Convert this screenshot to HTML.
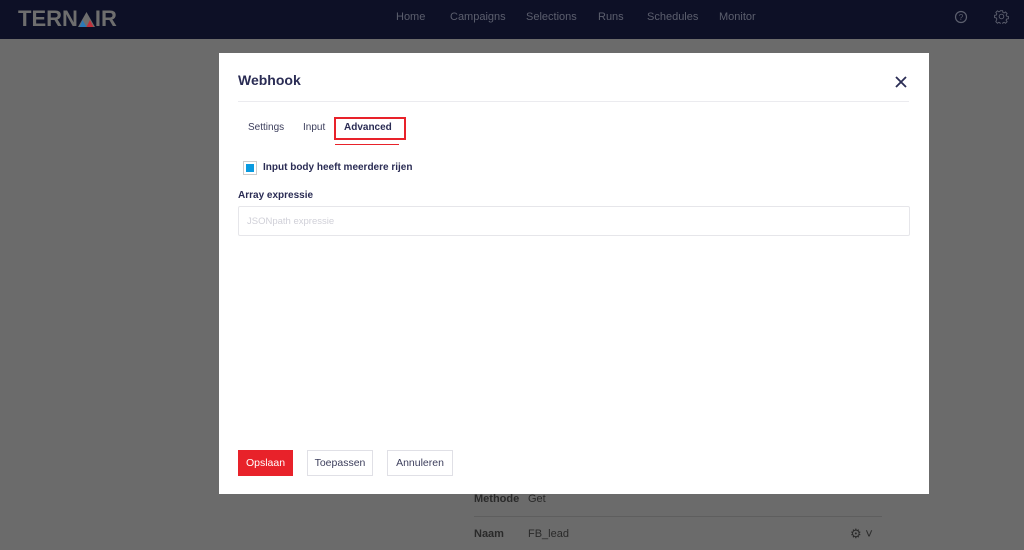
<!DOCTYPE html><html><head><style>
*{box-sizing:border-box;margin:0;padding:0}
body{width:1024px;height:550px;overflow:hidden;background:#6b6b6b;font-family:"Liberation Sans",sans-serif;position:relative}
.nav{position:absolute;left:0;top:0;width:1024px;height:39px;background:#0d1026}
.logo{position:absolute;left:18px;top:6px;font-size:22px;font-weight:bold;color:#6e6e6e;letter-spacing:0px}
.nl{position:absolute;top:11px;font-size:11px;color:#5c5f6e}
.m{position:absolute;left:219px;top:53px;width:710px;height:441px;background:#fff}
.t{position:absolute;font-size:11px;color:#3c3e5c}
.bg{position:absolute;font-size:11px;color:#2a2a2a}
.btn{position:absolute;top:397px;height:26px;border:1px solid #e0e0e6;font-size:10.5px;color:#3c3e5c;text-align:center;line-height:24px;background:#fff}
</style></head><body>
<div class="nav">
<div class="logo">TERN<span style="position:relative;display:inline-block;width:17px;height:15px;vertical-align:-1px"><svg width="17" height="15" viewBox="0 0 17 15"><polygon points="8.5,0 0,15 17,15" fill="#6e6e6e"/><polygon points="4.5,8 1.5,15 8.5,15" fill="#2a7ab8"/><polygon points="8.5,15 12,8 15.5,15" fill="#c0303a"/></svg></span>IR</div>
<span class="nl" style="left:396px">Home</span><span class="nl" style="left:450px">Campaigns</span><span class="nl" style="left:526px">Selections</span><span class="nl" style="left:598px">Runs</span><span class="nl" style="left:647px">Schedules</span><span class="nl" style="left:719px">Monitor</span>
<svg style="position:absolute;left:954px;top:10px" width="14" height="14" viewBox="0 0 14 14"><circle cx="7" cy="7" r="5.5" fill="none" stroke="#5c5f6e" stroke-width="1.2"/><text x="7" y="10" font-size="8" text-anchor="middle" fill="#5c5f6e" font-family="Liberation Sans">?</text></svg>
<svg style="position:absolute;left:994px;top:9px" width="15" height="15" viewBox="0 0 24 24"><path d="M12 8a4 4 0 100 8 4 4 0 000-8zM10 2h4l.5 3 2 1 2.5-1.8 2.8 2.8L20 9.5l1 2 3 .5v4l-3 .5-1 2 1.8 2.5-2.8 2.8-2.5-1.8-2 1-.5 3h-4l-.5-3-2-1-2.5 1.8-2.8-2.8L4 16.5l-1-2-3-.5v-4l3-.5 1-2L2.2 5 5 2.2 7.5 4l2-1z" fill="none" stroke="#5c5f6e" stroke-width="1.6" transform="scale(.92) translate(1 1)"/></svg>
</div>
<div class="bg" style="left:474px;top:493px;font-weight:bold">Methode</div><div class="bg" style="left:528px;top:493px">Get</div>
<div style="position:absolute;left:474px;top:516px;width:408px;height:1px;background:#5e5e5e"></div>
<div class="bg" style="left:474px;top:528px;font-weight:bold">Naam</div><div class="bg" style="left:528px;top:528px">FB_lead</div>
<div class="bg" style="left:850px;top:526px;font-size:13px">⚙ ˅</div>
<div class="m">
<div class="t" style="left:19px;top:19px;font-size:14px;font-weight:bold;color:#2a2c54">Webhook</div>
<svg style="position:absolute;left:675px;top:22px" width="14" height="14"><path d="M2 2L12 12M12 2L2 12" stroke="#2a2c54" stroke-width="1.8"/></svg>
<div style="position:absolute;left:19px;top:48px;width:671px;height:1px;background:#ebebef"></div>
<div class="t" style="left:29px;top:69px;font-size:10px">Settings</div>
<div class="t" style="left:84px;top:69px;font-size:10px">Input</div>
<div style="position:absolute;left:115px;top:64px;width:72px;height:23px;border:2px solid #e8222a"></div>
<div class="t" style="left:125px;top:69px;font-size:10px;font-weight:bold;color:#2a2c54">Advanced</div>
<div style="position:absolute;left:116px;top:91px;width:64px;height:1px;background:#e8222a"></div>
<div style="position:absolute;left:24px;top:108px;width:14px;height:14px;border:1px solid #ccc;padding:2px"><div style="width:100%;height:100%;background:#0a9be0"></div></div>
<div class="t" style="left:44px;top:109px;font-size:10px;font-weight:bold;color:#2a2c54">Input body heeft meerdere rijen</div>
<div class="t" style="left:19px;top:137px;font-size:10px;font-weight:bold;color:#2a2c54">Array expressie</div>
<div style="position:absolute;left:19px;top:153px;width:672px;height:30px;border:1px solid #e6e6ea;border-radius:2px"></div>
<div class="t" style="left:28px;top:163px;font-size:9.5px;color:#d0d0d8">JSONpath expressie</div>
<div class="btn" style="left:19px;width:55px;background:#e8222a;border-color:#e8222a;color:#fff">Opslaan</div>
<div class="btn" style="left:88px;width:66px">Toepassen</div>
<div class="btn" style="left:168px;width:66px">Annuleren</div>
</div>
</body></html>
